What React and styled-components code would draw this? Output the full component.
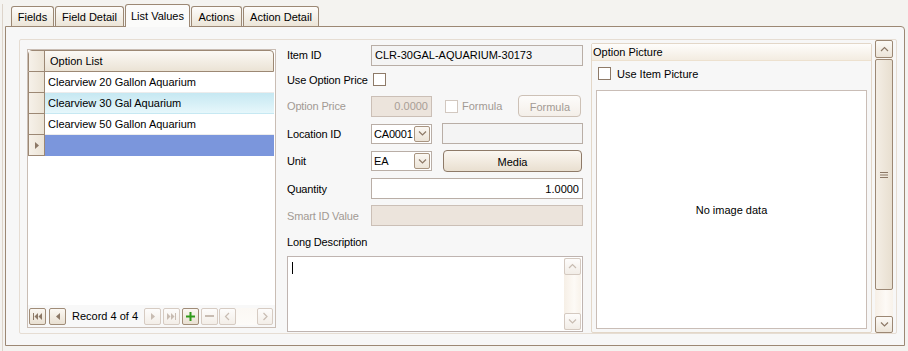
import React from 'react';
import styled, { createGlobalStyle } from 'styled-components';

const Global = createGlobalStyle`
  html, body { margin: 0; padding: 0; background: #f4f3f0; }
  body { font-family: "Liberation Sans", Arial, sans-serif; font-size: 11px; color: #000; }
  * { box-sizing: border-box; }
`;

const BROWN = '#9c8874';
const LIGHT = '#c9bdb4';

const Window = styled.div`
  width: 908px;
  height: 351px;
  overflow: hidden;
  background: #f4f3f0;
  padding: 4px 0 0 2px;
`;

const Frame = styled.div`
  border-left: 1px solid #ddd4ca;
  padding-left: 2px;
  height: 100%;
`;

const TabStrip = styled.div`
  display: flex;
  align-items: flex-start;
  gap: 1px;
  height: 23px;
  margin-left: 6px;
`;

const Tab = styled.div`
  position: relative;
  width: ${p => p.$w}px;
  height: ${p => (p.$active ? 23 : 20)}px;
  margin-top: ${p => (p.$active ? 0 : 2)}px;
  border: 1px solid ${BROWN};
  border-bottom: none;
  border-radius: 3px 3px 0 0;
  display: flex;
  align-items: center;
  justify-content: center;
  font-size: 11px;
  padding-top: ${p => (p.$active ? 0 : 1)}px;
  background: ${p => (p.$active ? '#fbfbfa' : 'linear-gradient(#fdfcfa, #ece5d8)')};
  z-index: ${p => (p.$active ? 2 : 0)};
`;

const Panel = styled.div`
  position: relative;
  margin-top: -1px;
  width: 900px;
  height: 320px;
  border: 1px solid ${BROWN};
  border-top-right-radius: 4px;
  background: #f7f7f7;
  padding: 12px 0 0 13px;
`;

const InnerGroup = styled.div`
  width: 878px;
  height: 295px;
  border: 1px solid #e6ddd3;
  border-radius: 2px;
  display: flex;
  align-items: flex-start;
  padding-left: 7px;
  background: #f7f7f7;
`;

/* ---------- Grid ---------- */
const Grid = styled.div`
  margin-top: 9px;
  width: 249px;
  height: 279px;
  border: 1px solid ${LIGHT};
  background: #fff;
  display: flex;
  flex-direction: column;
`;

const HeaderRow = styled.div`
  display: flex;
  height: 22px;
  border: 1px solid ${BROWN};
  border-radius: 4px 4px 0 0;
  background: linear-gradient(#fbf9f5, #ebe3d5);
  margin-right: 1px;
`;

const Indicator = styled.div`
  width: 16px;
  flex: none;
  border-right: 1px solid ${BROWN};
  background: linear-gradient(90deg, #f6f1e9, #ece4d6);
  display: flex;
  align-items: center;
  justify-content: center;
`;

const HeaderCell = styled.div`
  flex: 1;
  padding-left: 5px;
  line-height: 20px;
`;

const Row = styled.div`
  display: flex;
  height: 21px;
  border-left: 1px solid ${BROWN};
  margin-right: 1px;
  ${Indicator} { border-bottom: 1px solid ${BROWN}; }
`;

const rowBg = {
  normal: '#ffffff',
  focused: 'linear-gradient(#c6e8f2, #e6f7fb)',
  newrow: '#7b96dc',
};

const Cell = styled.div`
  flex: 1;
  padding-left: 3px;
  line-height: 20px;
  background: ${p => rowBg[p.$kind]};
  border-bottom: 1px solid ${p => (p.$kind === 'normal' ? '#ececec' : 'transparent')};
  white-space: nowrap;
`;

const GridFill = styled.div`
  flex: 1;
`;

const NavBar = styled.div`
  height: 22px;
  display: flex;
  align-items: center;
  padding-left: 1px;
  background: #f8f8f8;
`;

const NavButton = styled.div`
  width: ${p => p.$w || 17}px;
  height: 17px;
  margin-left: ${p => p.$ml || 0}px;
  flex: none;
  border: 1px solid ${p => (p.$disabled ? '#d6cbc2' : '#a08c78')};
  border-radius: 2px;
  background: ${p => (p.$disabled ? 'linear-gradient(#fdfcfb, #f3eee8)' : 'linear-gradient(#fbf8f3, #e9e0d2)')};
  display: flex;
  align-items: center;
  justify-content: center;
`;

const NavText = styled.span`
  margin-left: 6px;
  font-size: 11px;
  width: 71px;
  flex: none;
  white-space: nowrap;
`;

const NavTrack = styled.div`
  width: 21px;
  height: 17px;
  background: linear-gradient(#fbf8f4, #fdfbf8);
`;

/* ---------- Form ---------- */
const Form = styled.div`
  margin-left: 11px;
  margin-top: 4px;
  width: 296px;
  display: flex;
  flex-direction: column;
`;

const FormRow = styled.div`
  display: flex;
  align-items: center;
  height: ${p => p.$h}px;
`;

const Label = styled.div`
  width: 84px;
  flex: none;
  color: ${p => (p.$disabled ? '#a29a94' : '#000')};
  white-space: nowrap;
  letter-spacing: -0.15px;
`;

const Input = styled.div`
  width: ${p => p.$w}px;
  height: 21px;
  flex: none;
  margin-left: ${p => p.$ml || 0}px;
  border: 1px solid ${p => (p.$disabled ? '#cbbfb6' : '#b9aea6')};
  background: ${p => ({ ro: '#f4f4f4', dis: '#ece4dc', edit: '#ffffff' }[p.$kind])};
  color: ${p => (p.$disabled ? '#a89e96' : '#000')};
  display: flex;
  align-items: center;
  justify-content: ${p => (p.$right ? 'flex-end' : 'flex-start')};
  padding: 0 3px;
  white-space: nowrap;
`;

const Select = styled.div`
  width: 61px;
  height: 20px;
  flex: none;
  border: 1px solid #b9aea6;
  background: #fff;
  display: flex;
  align-items: center;
  padding-left: 2px;
  justify-content: space-between;
  padding-right: 1px;
  letter-spacing: -0.2px;
`;

const DropBtn = styled.div`
  width: 16px;
  height: 16px;
  border: 1px solid #a89480;
  border-radius: 2px;
  background: linear-gradient(#fbf8f3, #ece4d8);
  display: flex;
  align-items: center;
  justify-content: center;
`;

const CheckBox = styled.div`
  width: 13px;
  height: 13px;
  flex: none;
  margin-left: ${p => p.$ml || 0}px;
  border: 1px solid ${p => (p.$disabled ? '#d2c8c0' : '#8e7a68')};
  background: #fff;
`;

const SmallLabel = styled.span`
  margin-left: ${p => p.$ml}px;
  color: ${p => (p.$disabled ? '#a29a94' : '#000')};
`;

const Button = styled.div`
  width: ${p => p.$w}px;
  height: 22px;
  flex: none;
  margin-left: ${p => p.$ml || 0}px;
  border: 1px solid ${p => (p.$disabled ? '#cdc1b6' : '#8e7a68')};
  border-radius: 4px;
  background: ${p => (p.$disabled ? 'linear-gradient(#fdfcfb, #f4efe9)' : 'linear-gradient(#fbf7f1, #e9dfd0)')};
  color: ${p => (p.$disabled ? '#a29a94' : '#000')};
  display: flex;
  align-items: center;
  justify-content: center;
  padding-top: 1px;
`;

const TextArea = styled.div`
  margin-top: 1px;
  width: 296px;
  height: 76px;
  border: 1px solid #bfb4b0;
  background: #fff;
  display: flex;
  justify-content: space-between;
  padding: 1px 1px 1px 4px;
`;

const Caret = styled.div`
  width: 1px;
  height: 12px;
  margin-top: 4px;
  background: #000;
`;

const VScroll = styled.div`
  width: ${p => p.$w}px;
  height: ${p => p.$h}px;
  flex: none;
  display: flex;
  flex-direction: column;
  background: linear-gradient(90deg, #f6efe6, #fdfaf6 60%, #f8f2ea);
`;

const ScrollBtn = styled.div`
  height: ${p => p.$h}px;
  flex: none;
  border: 1px solid ${p => (p.$disabled ? '#d4c9c0' : '#9c8874')};
  border-radius: 2px;
  background: ${p => (p.$disabled ? 'linear-gradient(#fdfcfb, #f2ede7)' : 'linear-gradient(#fcfaf6, #ece4d8)')};
  display: flex;
  align-items: center;
  justify-content: center;
`;

const Thumb = styled.div`
  height: ${p => p.$h}px;
  margin-top: 1px;
  border: 1px solid #9c8874;
  border-radius: 2px;
  background: linear-gradient(90deg, #f4eee5, #e8dfd0);
  display: flex;
  align-items: center;
  justify-content: center;
`;

const Spacer = styled.div`
  flex: 1;
`;

/* ---------- Picture group ---------- */
const PicGroup = styled.div`
  margin-left: 8px;
  margin-top: 3px;
  width: 281px;
  height: 290px;
  border: 1px solid #e3d7c8;
  border-radius: 2px;
  background: #f7f7f7;
  display: flex;
  flex-direction: column;
`;

const PicHeader = styled.div`
  height: 17px;
  line-height: 16px;
  padding-left: 1px;
  background: linear-gradient(#fefdfb, #f3ece1);
  border-bottom: 1px solid #ede1cf;
`;

const PicCheckRow = styled.div`
  display: flex;
  align-items: center;
  padding-left: 6px;
  margin-top: 6px;
  height: 13px;
`;

const ImageBox = styled.div`
  margin: 10px 0 0 4px;
  width: 271px;
  height: 239px;
  border: 1px solid #c9bdb6;
  background: #fff;
  display: flex;
  align-items: center;
  justify-content: center;
`;

const MainScroll = styled(VScroll)`
  margin-left: 3px;
`;

const IC = '#8c7866';
const ICD = '#c8bcb2';

const Chevron = ({ dir, color = IC }) => {
  const pts = {
    up: '1,5 4.5,1.5 8,5',
    down: '1,1.5 4.5,5 8,1.5',
    left: '5,1 1.5,4.5 5,8',
    right: '1.5,1 5,4.5 1.5,8',
  }[dir];
  const vert = dir === 'up' || dir === 'down';
  return (
    <svg width={vert ? 9 : 7} height={vert ? 7 : 9} viewBox={vert ? '0 0 9 7' : '0 0 7 9'}>
      <polyline points={pts} fill="none" stroke={color} strokeWidth="1.2" />
    </svg>
  );
};

const Tri = ({ dir, color }) => (
  <svg width="4" height="7" viewBox="0 0 4 7">
    <polygon points={dir === 'left' ? '4,0 0,3.5 4,7' : '0,0 4,3.5 0,7'} fill={color} />
  </svg>
);

const FirstIcon = ({ color }) => (
  <svg width="9" height="7" viewBox="0 0 9 7">
    <rect x="0" y="0" width="1" height="7" fill={color} />
    <polygon points="5,0 1.5,3.5 5,7" fill={color} />
    <polygon points="9,0 5.5,3.5 9,7" fill={color} />
  </svg>
);

const LastIcon = ({ color }) => (
  <svg width="9" height="7" viewBox="0 0 9 7">
    <polygon points="0,0 3.5,3.5 0,7" fill={color} />
    <polygon points="4,0 7.5,3.5 4,7" fill={color} />
    <rect x="8" y="0" width="1" height="7" fill={color} />
  </svg>
);

const PlusIcon = () => (
  <svg width="9" height="9" viewBox="0 0 9 9">
    <rect x="3.5" y="0" width="2" height="9" fill="#2f9a1a" />
    <rect x="0" y="3.5" width="9" height="2" fill="#2f9a1a" />
  </svg>
);

const MinusIcon = () => (
  <svg width="9" height="2" viewBox="0 0 9 2">
    <rect x="0" y="0" width="9" height="2" fill={ICD} />
  </svg>
);

const Grip = () => (
  <svg width="8" height="6" viewBox="0 0 8 6">
    <rect x="0" y="0" width="8" height="1" fill={IC} />
    <rect x="0" y="2.5" width="8" height="1" fill={IC} />
    <rect x="0" y="5" width="8" height="1" fill={IC} />
  </svg>
);

const rows = [
  { text: 'Clearview 20 Gallon Aquarium', kind: 'normal' },
  { text: 'Clearview 30 Gal Aquarium', kind: 'focused' },
  { text: 'Clearview 50 Gallon Aquarium', kind: 'normal' },
  { text: '', kind: 'newrow', current: true },
];

const tabs = [
  { label: 'Fields', w: 43 },
  { label: 'Field Detail', w: 69 },
  { label: 'List Values', w: 65, active: true },
  { label: 'Actions', w: 51 },
  { label: 'Action Detail', w: 76 },
];

export default function App() {
  return (
    <>
      <Global />
      <Window>
        <Frame>
          <TabStrip>
            {tabs.map(t => (
              <Tab key={t.label} $w={t.w} $active={t.active}>{t.label}</Tab>
            ))}
          </TabStrip>
          <Panel>
            <InnerGroup>
              <Grid>
                <HeaderRow>
                  <Indicator />
                  <HeaderCell>Option List</HeaderCell>
                </HeaderRow>
                {rows.map((r, i) => (
                  <Row key={i}>
                    <Indicator>{r.current && <Tri dir="right" color={IC} />}</Indicator>
                    <Cell $kind={r.kind}>{r.text}</Cell>
                  </Row>
                ))}
                <GridFill />
                <NavBar>
                  <NavButton><FirstIcon color={IC} /></NavButton>
                  <NavButton $ml={3}><Tri dir="left" color={IC} /></NavButton>
                  <NavText>Record 4 of 4</NavText>
                  <NavButton $ml={1} $disabled><Tri dir="right" color={ICD} /></NavButton>
                  <NavButton $ml={2} $disabled><LastIcon color={ICD} /></NavButton>
                  <NavButton $ml={2}><PlusIcon /></NavButton>
                  <NavButton $ml={2} $disabled><MinusIcon /></NavButton>
                  <NavButton $ml={1} $disabled><Chevron dir="left" color={ICD} /></NavButton>
                  <NavTrack />
                  <NavButton $w={16} $disabled><Chevron dir="right" color={ICD} /></NavButton>
                </NavBar>
              </Grid>

              <Form>
                <FormRow $h={22}>
                  <Label>Item ID</Label>
                  <Input $w={212} $kind="ro">CLR-30GAL-AQUARIUM-30173</Input>
                </FormRow>
                <FormRow $h={27}>
                  <Label>Use Option Price</Label>
                  <CheckBox $ml={2} />
                </FormRow>
                <FormRow $h={26}>
                  <Label $disabled>Option Price</Label>
                  <Input $w={61} $kind="dis" $disabled $right>0.0000</Input>
                  <CheckBox $ml={13} $disabled />
                  <SmallLabel $ml={4} $disabled>Formula</SmallLabel>
                  <Button $w={63} $ml={16} $disabled>Formula</Button>
                </FormRow>
                <FormRow $h={29}>
                  <Label>Location ID</Label>
                  <Select>CA0001<DropBtn><Chevron dir="down" /></DropBtn></Select>
                  <Input $w={141} $ml={10} $kind="ro" />
                </FormRow>
                <FormRow $h={26}>
                  <Label>Unit</Label>
                  <Select>EA<DropBtn><Chevron dir="down" /></DropBtn></Select>
                  <Button $w={139} $ml={11}>Media</Button>
                </FormRow>
                <FormRow $h={29}>
                  <Label>Quantity</Label>
                  <Input $w={212} $kind="edit" $right>1.0000</Input>
                </FormRow>
                <FormRow $h={25}>
                  <Label $disabled>Smart ID Value</Label>
                  <Input $w={212} $kind="dis" $disabled />
                </FormRow>
                <FormRow $h={27}>
                  <Label>Long Description</Label>
                </FormRow>
                <TextArea>
                  <Caret />
                  <VScroll $w={17} $h={72}>
                    <ScrollBtn $h={17} $disabled><Chevron dir="up" color={ICD} /></ScrollBtn>
                    <Spacer />
                    <ScrollBtn $h={17} $disabled><Chevron dir="down" color={ICD} /></ScrollBtn>
                  </VScroll>
                </TextArea>
              </Form>

              <PicGroup>
                <PicHeader>Option Picture</PicHeader>
                <PicCheckRow>
                  <CheckBox />
                  <SmallLabel $ml={6}>Use Item Picture</SmallLabel>
                </PicCheckRow>
                <ImageBox>No image data</ImageBox>
              </PicGroup>

              <MainScroll $w={18} $h={293}>
                <ScrollBtn $h={18}><Chevron dir="up" /></ScrollBtn>
                <Thumb $h={231}><Grip /></Thumb>
                <Spacer />
                <ScrollBtn $h={17}><Chevron dir="down" /></ScrollBtn>
              </MainScroll>
            </InnerGroup>
          </Panel>
        </Frame>
      </Window>
    </>
  );
}
